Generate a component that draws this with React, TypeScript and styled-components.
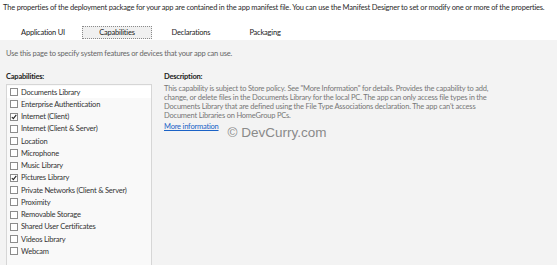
import styled, { createGlobalStyle } from "styled-components";

const GlobalStyle = createGlobalStyle`
    html, body {
        margin: 0;
        padding: 0;
        background: #ffffff;
    }
    body {
        font-family: Lato, "Liberation Sans", sans-serif;
        width: 557px;
        height: 265px;
        overflow: hidden;
    }
`

const capabilities = [
    { name: "Documents Library", checked: false, highlighted: true },
    { name: "Enterprise Authentication", checked: false },
    { name: "Internet (Client)", checked: true },
    { name: "Internet (Client & Server)", checked: false },
    { name: "Location", checked: false },
    { name: "Microphone", checked: false },
    { name: "Music Library", checked: false },
    { name: "Pictures Library", checked: true },
    { name: "Private Networks (Client & Server)", checked: false },
    { name: "Proximity", checked: false },
    { name: "Removable Storage", checked: false },
    { name: "Shared User Certificates", checked: false },
    { name: "Videos Library", checked: false },
    { name: "Webcam", checked: false },
]

const tabs = ["Application UI", "Capabilities", "Declarations", "Packaging"]

function CheckBox({ checked }: { checked: boolean }) {
    return (
        <BoxStyled>
            {checked && (
                <svg width="6" height="6" viewBox="0 0 6 6">
                    <path d="M0.8 3 L2.3 4.7 L5.3 0.8" fill="none" stroke="#222" strokeWidth="1.1" />
                </svg>
            )}
        </BoxStyled>
    )
}

export default function App() {
    return (
        <Page>
            <GlobalStyle />
            <Intro>
                The properties of the deployment package for your app are contained in the app manifest file. You can use the Manifest Designer to set or modify one or more of the properties.
            </Intro>
            <TabBar>
                {tabs.map((tab) => (
                    <Tab key={tab} $active={tab === "Capabilities"}>{tab}</Tab>
                ))}
            </TabBar>
            <Body>
                <Hint>Use this page to specify system features or devices that your app can use.</Hint>
                <Columns>
                    <LeftColumn>
                        <Label>Capabilities:</Label>
                        <List>
                            {capabilities.map((item) => (
                                <Row key={item.name} $highlighted={!!item.highlighted}>
                                    <CheckBox checked={item.checked} />
                                    <span>{item.name}</span>
                                </Row>
                            ))}
                        </List>
                    </LeftColumn>
                    <Details>
                        <Label>Description:</Label>
                        <Paragraph>
                            This capability is subject to Store policy. See "More Information" for details. Provides the capability to add,<br />
                            change, or delete files in the Documents Library for the local PC. The app can only access file types in the<br />
                            Documents Library that are defined using the File Type Associations declaration. The app can't access<br />
                            Document Libraries on HomeGroup PCs.
                        </Paragraph>
                        <LinkRow>
                            <MoreLink href="#">More information</MoreLink>
                            <Watermark>© DevCurry.com</Watermark>
                        </LinkRow>
                    </Details>
                </Columns>
            </Body>
        </Page>
    )
}

const smallText = `
    font-size: 7.5px;
    letter-spacing: -0.2px;
`

const Page = styled.div`
    width: 557px;
    height: 265px;
    display: flex;
    flex-direction: column;
    background: #ffffff;
    color: #333333;
    overflow: hidden;
`

const Intro = styled.div`
    ${smallText}
    padding: 2px 0 0 3px;
    line-height: 11px;
    color: #2b2b2b;
    white-space: nowrap;
`

const TabBar = styled.div`
    display: flex;
    gap: 4px;
    padding-left: 8px;
    margin-top: 13px;
    height: 14px;
`

const Tab = styled.div<{ $active: boolean }>`
    ${smallText}
    box-sizing: border-box;
    width: 70px;
    height: 13px;
    display: flex;
    align-items: center;
    justify-content: center;
    color: #222222;
    background: ${({ $active }) => ($active ? "#f0f0f0" : "transparent")};
    border: 1px dotted ${({ $active }) => ($active ? "#8a8a8a" : "transparent")};
`

const Body = styled.div`
    flex: 1;
    background: #f3f3f3;
    padding: 8px 6px 0;
    display: flex;
    flex-direction: column;
    min-height: 0;
`

const Hint = styled.div`
    ${smallText}
    line-height: 11px;
    color: #666666;
`

const Columns = styled.div`
    flex: 1;
    display: grid;
    grid-template-columns: 146px 1fr;
    column-gap: 12px;
    margin-top: 12px;
    min-height: 0;
`

const LeftColumn = styled.div`
    display: flex;
    flex-direction: column;
    min-height: 0;
`

const Label = styled.div`
    ${smallText}
    line-height: 11px;
    font-weight: 700;
    color: #222222;
    margin-bottom: 2px;
`

const List = styled.div`
    flex: 1;
    box-sizing: border-box;
    border: 1px solid #d6d6d6;
    border-bottom: none;
    background: #f9f9f9;
    padding-top: 1px;
    overflow: hidden;
`

const Row = styled.div<{ $highlighted: boolean }>`
    ${smallText}
    height: 12.25px;
    display: flex;
    align-items: center;
    gap: 3px;
    padding-left: 3px;
    color: #333333;
    background: ${({ $highlighted }) => ($highlighted ? "#ffffff" : "transparent")};
`

const BoxStyled = styled.span`
    box-sizing: border-box;
    width: 8px;
    height: 8px;
    border: 1px solid #8c8c8c;
    background: #ffffff;
    display: flex;
    align-items: center;
    justify-content: center;
`

const Details = styled.div`
    display: flex;
    flex-direction: column;
`

const Paragraph = styled.div`
    ${smallText}
    line-height: 9px;
    color: #777777;
    white-space: nowrap;
`

const LinkRow = styled.div`
    display: flex;
    align-items: flex-start;
    gap: 9px;
    margin-top: 1px;
`

const MoreLink = styled.a`
    ${smallText}
    line-height: 11px;
    color: #1a62c6;
    text-decoration: underline;
`

const Watermark = styled.span`
    font-family: "Liberation Sans", Arial, sans-serif;
    font-size: 13.5px;
    line-height: 14px;
    margin-top: 5px;
    color: #8a8a8a;
`
